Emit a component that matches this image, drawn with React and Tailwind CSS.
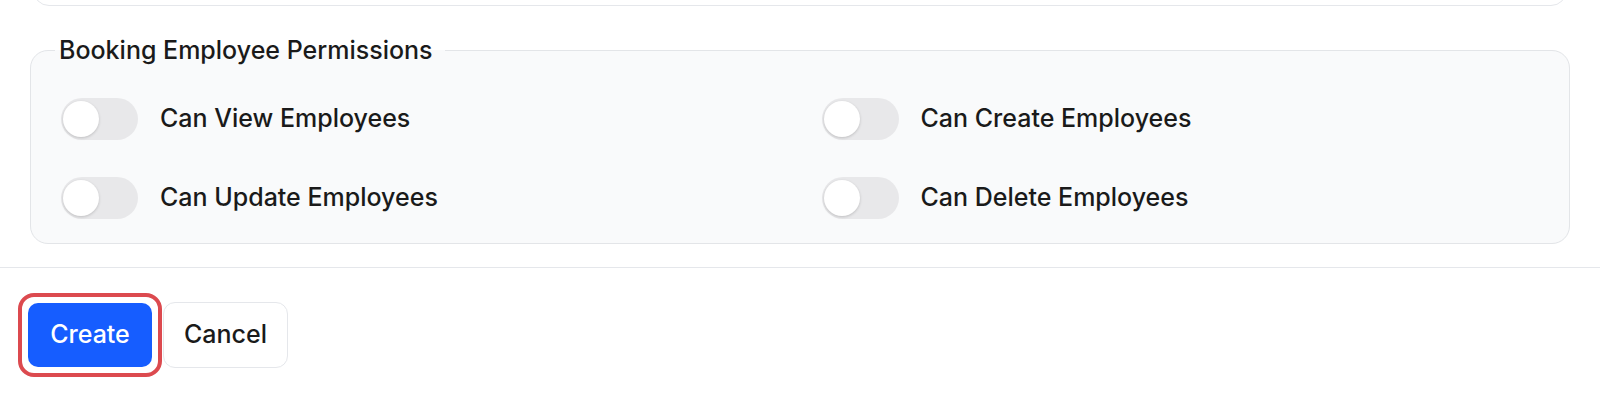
import { useState } from "react";

const permissions = [
  { key: "view", label: "Can View Employees" },
  { key: "create", label: "Can Create Employees" },
  { key: "update", label: "Can Update Employees" },
  { key: "delete", label: "Can Delete Employees" },
];

function Toggle({ checked, onChange }) {
  return (
    <button
      type="button"
      onClick={onChange}
      className={`relative h-[42px] w-[77px] shrink-0 rounded-full transition-colors ${
        checked ? "bg-[#165dff]" : "bg-[#e8e8ea]"
      }`}
    >
      <span
        className={`absolute top-[3px] h-[36px] w-[36px] rounded-full bg-white shadow-[0_1px_3px_rgba(0,0,0,0.18)] transition-all ${
          checked ? "left-[38px]" : "left-[2px]"
        }`}
      />
    </button>
  );
}

export default function App() {
  const [perms, setPerms] = useState({
    view: false,
    create: false,
    update: false,
    delete: false,
  });

  const toggle = (key) => setPerms({ ...perms, [key]: !perms[key] });

  return (
    <div
      className="min-h-[396px] bg-white text-[#1a1a1a]"
      style={{ fontFamily: "Inter, 'Noto Sans', sans-serif" }}
    >
      <div className="px-[30px]">
        {/* previous section, cut off at top */}
        <div className="mx-[3px] -mt-[40px] h-[46px] rounded-b-[16px] border border-[#e5e7eb] bg-white" />

        {/* Permissions */}
        <fieldset className="mt-[28px] rounded-[18px] border border-[#e3e5e8] bg-[#f9fafb] px-[26px] pb-[24px] pt-[32px]">
          <legend className="ml-[-2px] pl-1 pr-3 text-[25px] font-medium leading-[32px]">
            Booking Employee Permissions
          </legend>
          <div className="grid grid-cols-2 gap-x-[43px] gap-y-[37px] px-1">
            {permissions.map((p) => (
              <label key={p.key} className="flex cursor-pointer items-center gap-[22px]">
                <Toggle checked={perms[p.key]} onChange={() => toggle(p.key)} />
                <span className="text-[25px] font-medium">{p.label}</span>
              </label>
            ))}
          </div>
        </fieldset>
      </div>

      <div className="mt-[23px] border-t border-[#e5e7eb]" />

      {/* Actions */}
      <div className="flex items-center gap-[1px] px-[18px] pt-[25px]">
        {/* focus ring around Create */}
        <div className="rounded-[16px] border-4 border-[#dc4a4f] p-[6px]">
          <button className="block h-[64px] w-[124px] rounded-[10px] bg-[#165dff] text-[25px] font-medium text-white">
            Create
          </button>
        </div>
        <button className="h-[66px] w-[125px] rounded-[12px] border border-[#e5e7eb] bg-white text-[25px] font-medium">
          Cancel
        </button>
      </div>
    </div>
  );
}
